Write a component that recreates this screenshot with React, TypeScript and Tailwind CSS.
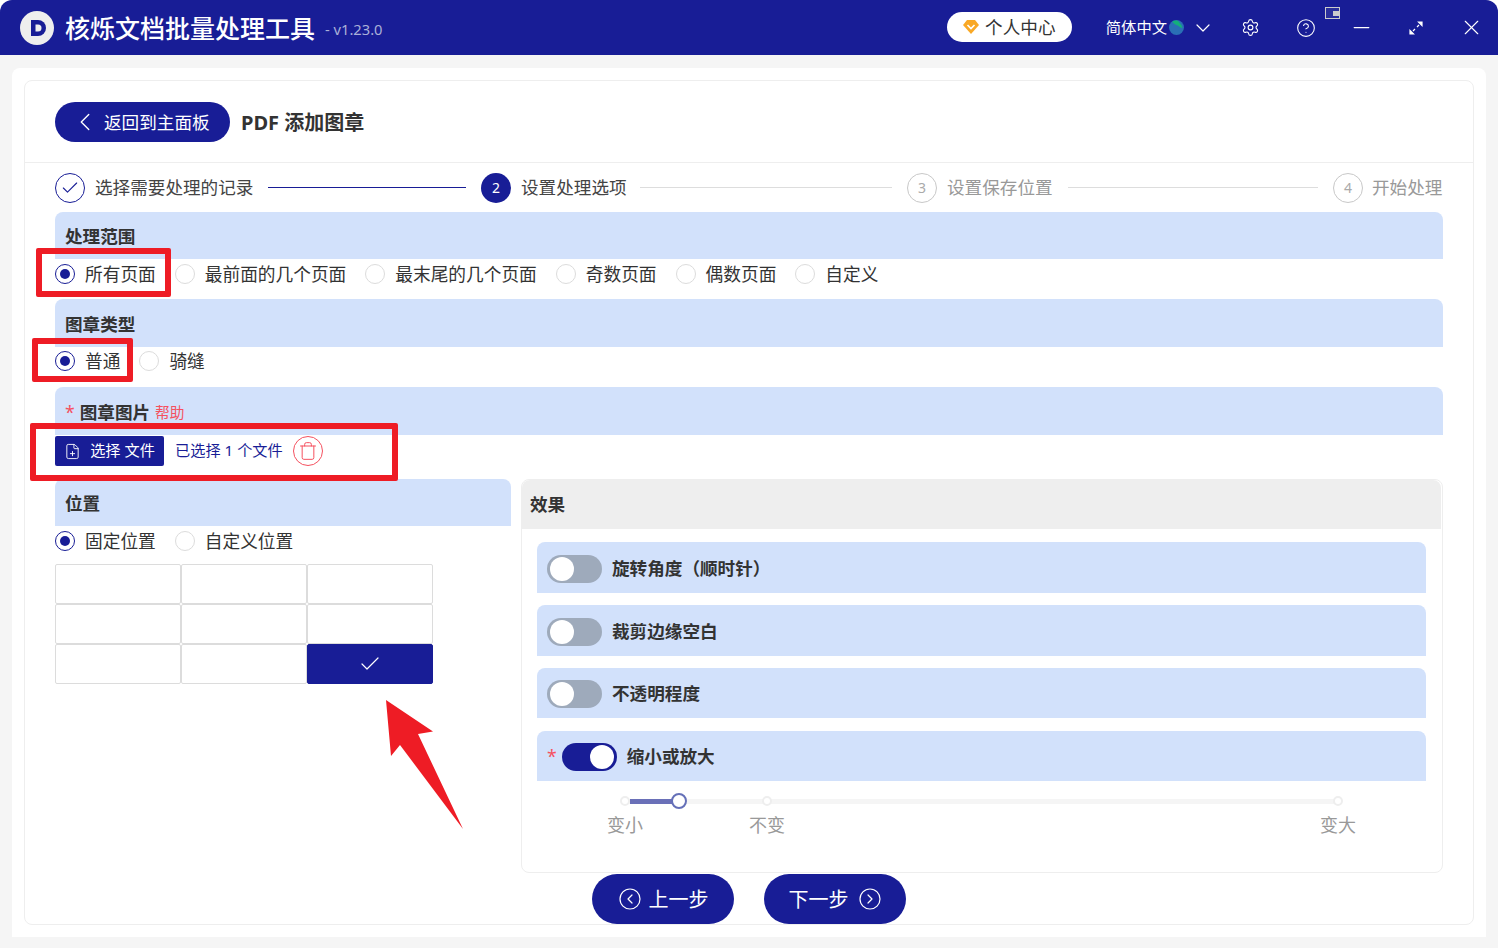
import { Check, ChevronDown, ChevronLeft, CircleChevronLeft, CircleChevronRight, CircleHelp, FilePlus, Minus, Settings, Trash, X } from "lucide-react";

const navy = "bg-[#181d96]";

const Radio = ({ label, checked = false }: { label: string; checked?: boolean }) => (
  <label className="flex items-center mr-[19px]">
    <span className={`flex h-5 w-5 items-center justify-center rounded-full border bg-white ${checked ? "border-[#181d96]" : "border-[#dcdcdc]"}`}>
      {checked && <span className={`h-[10px] w-[10px] rounded-full ${navy}`} />}
    </span>
    <span className="ml-[10px] text-[17.7px] leading-6 text-[#333]">{label}</span>
  </label>
);

const SectionHead = ({ children, tall = false }: { children: React.ReactNode; tall?: boolean }) => (
  <div className={`flex ${tall ? "h-[48px] pt-[13px]" : "h-[47px] pt-3"} items-start rounded-t-lg bg-[#d2e1fb] pl-[10px] text-[17.6px] font-bold leading-6 text-[#333]`}>
    {children}
  </div>
);

const StepNum = ({ n, active = false }: { n: number; active?: boolean }) => (
  <span className={`flex h-[30px] w-[30px] shrink-0 items-center justify-center rounded-full text-[14px] ${active ? `${navy} text-white` : "border border-[#c8c8c8] text-[#aaa]"}`}>
    {n}
  </span>
);

const Toggle = ({ on = false }: { on?: boolean }) => (
  <span className={`mt-[2px] flex h-[28px] w-[55px] shrink-0 items-center rounded-full px-[3px] ${on ? `${navy} justify-end` : "bg-[#9eaabb] justify-start"}`}>
    <span className="h-6 w-6 rounded-full bg-white" />
  </span>
);

const EffectRow = ({ label, short = false }: { label: string; short?: boolean }) => (
  <div className={`flex ${short ? "h-[50px]" : "h-[51px]"} items-center rounded-t-lg bg-[#d2e1fb] pl-[10px]`}>
    <Toggle />
    <span className="ml-[10px] pt-px text-[17.6px] font-bold text-[#333]">{label}</span>
  </div>
);

const GridCell = ({ on = false }: { on?: boolean }) => (
  <div className={`flex h-10 items-center justify-center rounded-[2px] border ${on ? `${navy} border-[#181d96]` : "border-[#dcdcdc] bg-white"}`}>
    {on && <Check className="h-6 w-6 text-white" strokeWidth={1.2} />}
  </div>
);

const Mark = ({ className }: { className: string }) => (
  <span className={`absolute top-[-3px] h-[10px] w-[10px] -translate-x-1/2 rounded-full border-2 border-[#eeeeee] bg-white ${className}`} />
);

const MarkLabel = ({ text, className }: { text: string; className: string }) => (
  <span className={`absolute top-[14px] -translate-x-1/2 whitespace-nowrap text-[18px] leading-6 text-[#999] ${className}`}>{text}</span>
);

export default function App() {
  return (
    <div className="relative h-[948px] w-[1498px] overflow-hidden bg-white [font-family:'Noto_Sans','Noto_Sans_CJK_SC',sans-serif]">
      {/* title bar */}
      <div className={`flex h-[55px] items-center rounded-t-xl ${navy} pl-[20px]`}>
        <svg width="34" height="34" viewBox="0 0 34 34" className="shrink-0">
          <circle cx="17" cy="17" r="17" fill="#eeeeee" />
          <path d="M11 9h7a8 8 0 0 1 0 16h-7z" fill="#181d96" />
          <path d="M15.500 13.500h2.500a3.500 3.500 0 0 1 0 7h-2.500z" fill="#eeeeee" />
        </svg>
        <span className="ml-[11px] mt-[3px] text-[25px] font-medium text-white">核烁文档批量处理工具</span>
        <span className="ml-[10px] mt-[3px] text-[14.700px] text-[#aab0d8]">- v1.23.0</span>
        <div className="ml-auto flex h-full items-center">
          <div className="mb-px flex h-[30px] w-[125px] items-center justify-center rounded-full bg-white">
            <svg width="16" height="14" viewBox="0 0 16 14">
              <path d="M4 0h8l4 5-8 9-8-9z" fill="#f9a825" />
              <path d="M4.500 5l3.500 3.500L11.500 5" fill="none" stroke="#fff" strokeWidth="1.600" />
            </svg>
            <span className="ml-[6px] text-[17.6px] text-[#333]">个人中心</span>
          </div>
          <span className="ml-[34px] text-[15.300px] text-white">简体中文</span>
          <svg width="15" height="15" viewBox="0 0 14 14" className="ml-[2px]">
            <circle cx="7" cy="7" r="7" fill="#2a6fb5" />
            <path d="M3 1.500c2-1.500 5-1.500 6 0 1 2 3 3 3.500 6-2 0-3-1.500-5-2.500-1.500-.5-3-1.500-4.500-3.500z" fill="#13b07a" />
          </svg>
          <ChevronDown className="ml-[7px] h-6 w-6 text-white" strokeWidth={1.2} />
          <Settings className="ml-[26px] h-[19px] w-[19px] text-white" strokeWidth={1.4} />
          <CircleHelp className="ml-[36px] h-5 w-5 text-white" strokeWidth={1.3} />
          <Minus className="ml-[33px] h-[25px] w-[25px] text-white" strokeWidth={1.2} />
          <svg width="14" height="14" viewBox="0 0 14 14" className="ml-[35px]" fill="none" stroke="#fff" strokeWidth="1.200">
            <path d="M9.500 1h3.500v3.500zM4.500 13h-3.500v-3.500z" fill="#fff" />
            <path d="M10 4l-2 2M4 10l2-2" />
          </svg>
          <X className="ml-[36px] mr-[14px] h-[25px] w-[25px] text-white" strokeWidth={1.1} />
        </div>
      </div>

      {/* page */}
      <div className="h-[893px] bg-[#f5f5f5] pl-3 pr-3 pt-[13px]">
        <div className="h-[869px] rounded-t-lg bg-white p-3">
          <div className="h-[845px] rounded-lg border border-[#eeeeee] bg-white">
            <div className="flex h-[82px] items-center border-b border-[#eeeeee] pl-[30px]">
              <button className={`flex h-10 w-[175px] items-center rounded-full ${navy} pl-[15px] text-[17.6px] text-white`}>
                <ChevronLeft className="h-[30px] w-[30px]" strokeWidth={1.1} />
                <span className="ml-[4px] mt-[2px]">返回到主面板</span>
              </button>
              <span className="ml-[11px] mt-[2px] text-[20px] font-bold text-[#333]">PDF 添加图章</span>
            </div>

            <div className="pl-[30px] pr-[30px]">
              {/* steps */}
              <div className="flex h-[49px] items-center text-[17.6px]">
                <span className="flex h-[30px] w-[30px] shrink-0 items-center justify-center rounded-full border border-[#181d96]">
                  <Check className="h-5 w-5 text-[#181d96]" strokeWidth={1.3} />
                </span>
                <span className="ml-[10px] w-[159px] whitespace-nowrap text-[#444]">选择需要处理的记录</span>
                <span className={`ml-[14px] mr-[15px] h-px w-[198px] ${navy}`} />
                <StepNum n={2} active />
                <span className="ml-[10px] w-[106px] whitespace-nowrap text-[#444]">设置处理选项</span>
                <span className="ml-[13px] mr-[15px] h-px w-[252px] bg-[#dddddd]" />
                <StepNum n={3} />
                <span className="ml-[10px] w-[106px] whitespace-nowrap text-[#999]">设置保存位置</span>
                <span className="ml-[15px] mr-[15px] h-px w-[250px] bg-[#dddddd]" />
                <StepNum n={4} />
                <span className="ml-[9px] whitespace-nowrap text-[#999]">开始处理</span>
              </div>

              <SectionHead>处理范围</SectionHead>
              <div className="flex h-10 items-start pt-[3px]">
                <Radio label="所有页面" checked />
                <Radio label="最前面的几个页面" />
                <Radio label="最末尾的几个页面" />
                <Radio label="奇数页面" />
                <Radio label="偶数页面" />
                <Radio label="自定义" />
              </div>

              <SectionHead tall>图章类型</SectionHead>
              <div className="flex h-10 items-start pt-[2px]">
                <Radio label="普通" checked />
                <Radio label="骑缝" />
              </div>

              <SectionHead tall>
                <span className="mr-[5px] font-normal text-[#f5515f]">*</span>
                图章图片
                <span className="ml-[5px] text-[14.700px] font-normal text-[#f5515f]">帮助</span>
              </SectionHead>
              <div className="flex h-[44px] items-start pt-px">
                <button className={`flex h-[30px] w-[109px] items-center justify-center rounded-[2px] ${navy} pb-[2px] text-[15.200px] text-white`}>
                  <FilePlus className="mr-[9px] mt-[2px] h-[17px] w-[17px]" strokeWidth={1.3} />
                  选择 文件
                </button>
                <span className="ml-[11px] self-center pb-[15px] text-[15.200px] text-[#181d96]">已选择 1 个文件</span>
                <span className="ml-[10px] flex h-[30px] w-[30px] items-center justify-center rounded-full border border-[#f5515f]">
                  <Trash className="h-5 w-5 text-[#f5515f]" strokeWidth={1.2} />
                </span>
              </div>

              <div className="flex gap-[10px]">
                {/* position */}
                <div className="w-[456px] shrink-0">
                  <SectionHead>位置</SectionHead>
                  <div className="flex h-[38px] items-start pt-[3px]">
                    <Radio label="固定位置" checked />
                    <Radio label="自定义位置" />
                  </div>
                  <div className="grid w-[378px] grid-cols-3">
                    <GridCell />
                    <GridCell />
                    <GridCell />
                    <GridCell />
                    <GridCell />
                    <GridCell />
                    <GridCell />
                    <GridCell />
                    <GridCell on />
                  </div>
                </div>

                {/* effects */}
                <div className="h-[394px] flex-1 rounded-lg border border-[#eeeeee]">
                  <div className="mr-px flex h-[49px] items-center rounded-t-lg bg-[#eeeeee] pl-2 text-[17.6px] font-bold text-[#333]">效果</div>
                  <div className="flex flex-col gap-3 pl-[15px] pr-[16px] pt-[13px]">
                    <EffectRow label="旋转角度（顺时针）" />
                    <EffectRow label="裁剪边缘空白" />
                    <EffectRow label="不透明程度" short />
                    <div className="mt-px flex h-[50px] items-center rounded-t-lg bg-[#d2e1fb] pl-[10px]">
                      <span className="mr-[5px] text-[17.6px] text-[#f5515f]">*</span>
                      <Toggle on />
                      <span className="ml-[10px] text-[17.6px] font-bold text-[#333]">缩小或放大</span>
                    </div>
                  </div>
                  <div className="relative ml-[103px] mt-[18px] h-[5px] w-[713px] rounded-full bg-[#f5f5f5]">
                    <span className="absolute left-[5px] top-0 h-[5px] w-[49px] bg-[#6a70b8]" />
                    <Mark className="left-0" />
                    <Mark className="left-[142px]" />
                    <Mark className="left-[713px]" />
                    <span className="absolute left-[54px] top-[-6px] h-4 w-4 -translate-x-1/2 rounded-full border-2 border-[#6570b8] bg-white" />
                    <MarkLabel text="变小" className="left-0" />
                    <MarkLabel text="不变" className="left-[142px]" />
                    <MarkLabel text="变大" className="left-[713px]" />
                  </div>
                </div>
              </div>

              {/* footer buttons */}
              <div className="mt-px flex justify-center gap-[30px]">
                <button className={`flex h-[50px] w-[142px] items-center justify-center rounded-full ${navy} text-[20px] text-white`}>
                  <CircleChevronLeft className="mr-[7px] h-6 w-6" strokeWidth={1.2} />
                  <span className="mt-[2px]">上一步</span>
                </button>
                <button className={`flex h-[50px] w-[142px] items-center justify-center rounded-full ${navy} text-[20px] text-white`}>
                  <span className="mt-[2px]">下一步</span>
                  <CircleChevronRight className="ml-[9px] h-6 w-6" strokeWidth={1.2} />
                </button>
              </div>
            </div>
          </div>
        </div>
      </div>

      {/* window-snap glyph over the title bar */}
      <span className="absolute left-[1325px] top-[7px] flex h-[12px] w-[15px] items-center justify-end border border-[#cccccc] bg-[#2a2f9c]">
        <span className="h-[5px] w-[6px] bg-[#cccccc]" />
      </span>

      {/* red annotations */}
      <div className="absolute left-[36px] top-[248px] h-[49px] w-[135px] rounded-[2px] border-[6px] border-[#ee1c25]" />
      <div className="absolute left-[32px] top-[338px] h-[44px] w-[101px] rounded-[2px] border-[6px] border-[#ee1c25]" />
      <div className="absolute left-[30px] top-[423px] h-[58px] w-[368px] rounded-[2px] border-[6px] border-[#ee1c25]" />
      <svg className="absolute left-[380px] top-[695px]" width="90" height="140" viewBox="380 695 90 140">
        <path d="M386 700L433 731.500L418 734L463 829L400 745L391 756z" fill="#ee1c25" />
      </svg>
    </div>
  );
}
